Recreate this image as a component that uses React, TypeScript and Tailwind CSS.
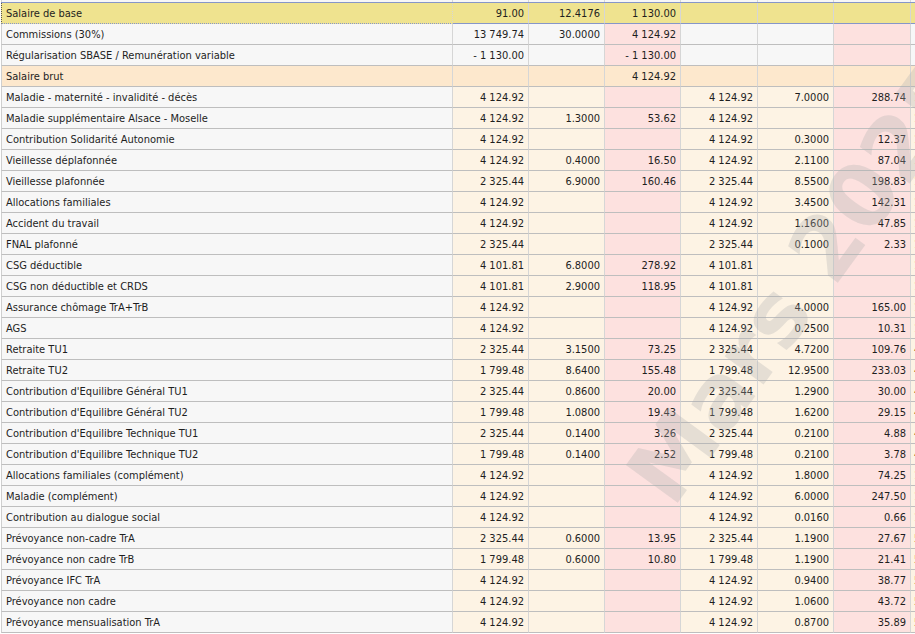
import React from 'react';

type Kind = 'sel' | 'top' | 'brut' | 'body';

type Row = {
  label: string;
  kind: Kind;
  cells: string[]; // 6 values
  tail?: string;
};

const rows: Row[] = [
  { label: 'Salaire de base', kind: 'sel', cells: ['91.00', '12.4176', '1 130.00', '', '', ''] },
  { label: 'Commissions (30%)', kind: 'top', cells: ['13 749.74', '30.0000', '4 124.92', '', '', ''] },
  { label: 'Régularisation SBASE / Remunération variable', kind: 'top', cells: ['- 1 130.00', '', '- 1 130.00', '', '', ''] },
  { label: 'Salaire brut', kind: 'brut', cells: ['', '', '4 124.92', '', '', ''] },
  { label: 'Maladie - maternité - invalidité - décès', kind: 'body', cells: ['4 124.92', '', '', '4 124.92', '7.0000', '288.74'], tail: '1' },
  { label: 'Maladie supplémentaire Alsace - Moselle', kind: 'body', cells: ['4 124.92', '1.3000', '53.62', '4 124.92', '', ''], tail: '1' },
  { label: 'Contribution Solidarité Autonomie', kind: 'body', cells: ['4 124.92', '', '', '4 124.92', '0.3000', '12.37'], tail: '1' },
  { label: 'Vieillesse déplafonnée', kind: 'body', cells: ['4 124.92', '0.4000', '16.50', '4 124.92', '2.1100', '87.04'], tail: '1' },
  { label: 'Vieillesse plafonnée', kind: 'body', cells: ['2 325.44', '6.9000', '160.46', '2 325.44', '8.5500', '198.83'], tail: '1' },
  { label: 'Allocations familiales', kind: 'body', cells: ['4 124.92', '', '', '4 124.92', '3.4500', '142.31'], tail: '1' },
  { label: 'Accident du travail', kind: 'body', cells: ['4 124.92', '', '', '4 124.92', '1.1600', '47.85'], tail: '1' },
  { label: 'FNAL plafonné', kind: 'body', cells: ['2 325.44', '', '', '2 325.44', '0.1000', '2.33'], tail: '1' },
  { label: 'CSG déductible', kind: 'body', cells: ['4 101.81', '6.8000', '278.92', '4 101.81', '', ''], tail: '1' },
  { label: 'CSG non déductible et CRDS', kind: 'body', cells: ['4 101.81', '2.9000', '118.95', '4 101.81', '', ''], tail: '1' },
  { label: 'Assurance chômage TrA+TrB', kind: 'body', cells: ['4 124.92', '', '', '4 124.92', '4.0000', '165.00'], tail: '1' },
  { label: 'AGS', kind: 'body', cells: ['4 124.92', '', '', '4 124.92', '0.2500', '10.31'], tail: '1' },
  { label: 'Retraite TU1', kind: 'body', cells: ['2 325.44', '3.1500', '73.25', '2 325.44', '4.7200', '109.76'], tail: '4' },
  { label: 'Retraite TU2', kind: 'body', cells: ['1 799.48', '8.6400', '155.48', '1 799.48', '12.9500', '233.03'], tail: '4' },
  { label: "Contribution d'Equilibre Général TU1", kind: 'body', cells: ['2 325.44', '0.8600', '20.00', '2 325.44', '1.2900', '30.00'], tail: '4' },
  { label: "Contribution d'Equilibre Général TU2", kind: 'body', cells: ['1 799.48', '1.0800', '19.43', '1 799.48', '1.6200', '29.15'], tail: '4' },
  { label: "Contribution d'Equilibre Technique TU1", kind: 'body', cells: ['2 325.44', '0.1400', '3.26', '2 325.44', '0.2100', '4.88'], tail: '4' },
  { label: "Contribution d'Equilibre Technique TU2", kind: 'body', cells: ['1 799.48', '0.1400', '2.52', '1 799.48', '0.2100', '3.78'], tail: '4' },
  { label: 'Allocations familiales (complément)', kind: 'body', cells: ['4 124.92', '', '', '4 124.92', '1.8000', '74.25'], tail: '1' },
  { label: 'Maladie (complément)', kind: 'body', cells: ['4 124.92', '', '', '4 124.92', '6.0000', '247.50'], tail: '1' },
  { label: 'Contribution au dialogue social', kind: 'body', cells: ['4 124.92', '', '', '4 124.92', '0.0160', '0.66'], tail: '1' },
  { label: 'Prévoyance non-cadre TrA', kind: 'body', cells: ['2 325.44', '0.6000', '13.95', '2 325.44', '1.1900', '27.67'], tail: '5' },
  { label: 'Prévoyance non cadre TrB', kind: 'body', cells: ['1 799.48', '0.6000', '10.80', '1 799.48', '1.1900', '21.41'], tail: '5' },
  { label: 'Prévoyance IFC TrA', kind: 'body', cells: ['4 124.92', '', '', '4 124.92', '0.9400', '38.77'], tail: '5' },
  { label: 'Prévoyance non cadre', kind: 'body', cells: ['4 124.92', '', '', '4 124.92', '1.0600', '43.72'], tail: '5' },
  { label: 'Prévoyance mensualisation TrA', kind: 'body', cells: ['4 124.92', '', '', '4 124.92', '0.8700', '35.89'], tail: '5' },
];

// background per column: label, c1..c6, tail
const palette: Record<Kind, string[]> = {
  sel: ['bg-[#efe38f]', 'bg-[#efe38f]', 'bg-[#efe38f]', 'bg-[#efe38f]', 'bg-[#efe38f]', 'bg-[#efe38f]', 'bg-[#efe38f]', 'bg-[#efe38f]'],
  top: ['bg-[#f7f7f7]', 'bg-[#f7f7f7]', 'bg-[#f7f7f7]', 'bg-[#fde1df]', 'bg-[#f7f7f7]', 'bg-[#f7f7f7]', 'bg-[#fde1df]', 'bg-[#f7f7f7]'],
  brut: ['bg-[#fde8cd]', 'bg-[#fde8cd]', 'bg-[#fde8cd]', 'bg-[#fde8cd]', 'bg-[#fde8cd]', 'bg-[#fde8cd]', 'bg-[#fde8cd]', 'bg-[#fde8cd]'],
  body: ['bg-[#f7f7f7]', 'bg-[#fdf3e4]', 'bg-[#fdf3e4]', 'bg-[#fde1df]', 'bg-[#fdf3e4]', 'bg-[#fdf3e4]', 'bg-[#fde1df]', 'bg-[#fdf3e4]'],
};

const gridCols = 'grid grid-cols-[452px_76px_76px_76px_77px_76px_77px_1fr]';

const GridRow: React.FC<{ row: Row }> = ({ row }) => {
  const bg = palette[row.kind];
  const sel = row.kind === 'sel';
  const hLine = sel ? 'border-b-[#8696c9]' : 'border-b-[#bebebe]';
  return (
    <div className={`${gridCols} ${sel ? 'h-[22px] border-t border-t-[#8696c9]' : 'h-[21px]'}`}>
      <div
        className={`${bg[0]} border-l border-r border-b border-r-[#d6d6d6] ${hLine} ${
          sel ? 'border-l-[#555] border-dotted' : 'border-l-[#cfcfcf]'
        } pl-1 pt-[2px] flex items-center whitespace-nowrap overflow-hidden`}
      >
        {row.label}
      </div>
      {row.cells.map((v, i) => (
        <div
          key={i}
          className={`${bg[i + 1]} border-r border-b border-r-[#d6d6d6] ${hLine} pr-1 pt-[2px] flex items-center justify-end whitespace-nowrap`}
        >
          {v}
        </div>
      ))}
      <div className={`${bg[7]} border-b ${hLine} pl-[3px] pt-[2px] flex items-center whitespace-nowrap overflow-hidden text-[#6b5a2e]`}>
        {row.tail ?? ''}
      </div>
    </div>
  );
};

const App: React.FC = () => {
  return (
    <div className="relative w-[915px] h-[634px] overflow-hidden bg-white pl-px text-[11px] text-[#1e1e1e] font-['DejaVu_Sans_Condensed','Liberation_Sans',sans-serif]">
      {/* tail of the previous (scrolled) row */}
      <div className={`${gridCols} h-[2px]`}>
        <div className="bg-[#f7f7f7] border-l border-r border-l-[#cfcfcf] border-r-[#d6d6d6]" />
        <div className="bg-[#f7f7f7] border-r border-r-[#d6d6d6]" />
        <div className="bg-[#f7f7f7] border-r border-r-[#d6d6d6]" />
        <div className="bg-[#f7f7f7] border-r border-r-[#d6d6d6]" />
        <div className="bg-[#f7f7f7] border-r border-r-[#d6d6d6]" />
        <div className="bg-[#f7f7f7] border-r border-r-[#d6d6d6]" />
        <div className="bg-[#f7f7f7] border-r border-r-[#d6d6d6]" />
        <div className="bg-[#f7f7f7]" />
      </div>
      {rows.map((r, i) => (
        <GridRow key={i} row={r} />
      ))}

      {/* watermark */}
      <div className="pointer-events-none absolute left-[801px] top-[282px] -translate-x-1/2 -translate-y-1/2 -rotate-[54deg] whitespace-nowrap leading-none text-[88px] font-bold text-[rgba(175,175,175,0.3)] font-['DejaVu_Sans',sans-serif]">
        Mars 2025
      </div>
    </div>
  );
};

export default App;
